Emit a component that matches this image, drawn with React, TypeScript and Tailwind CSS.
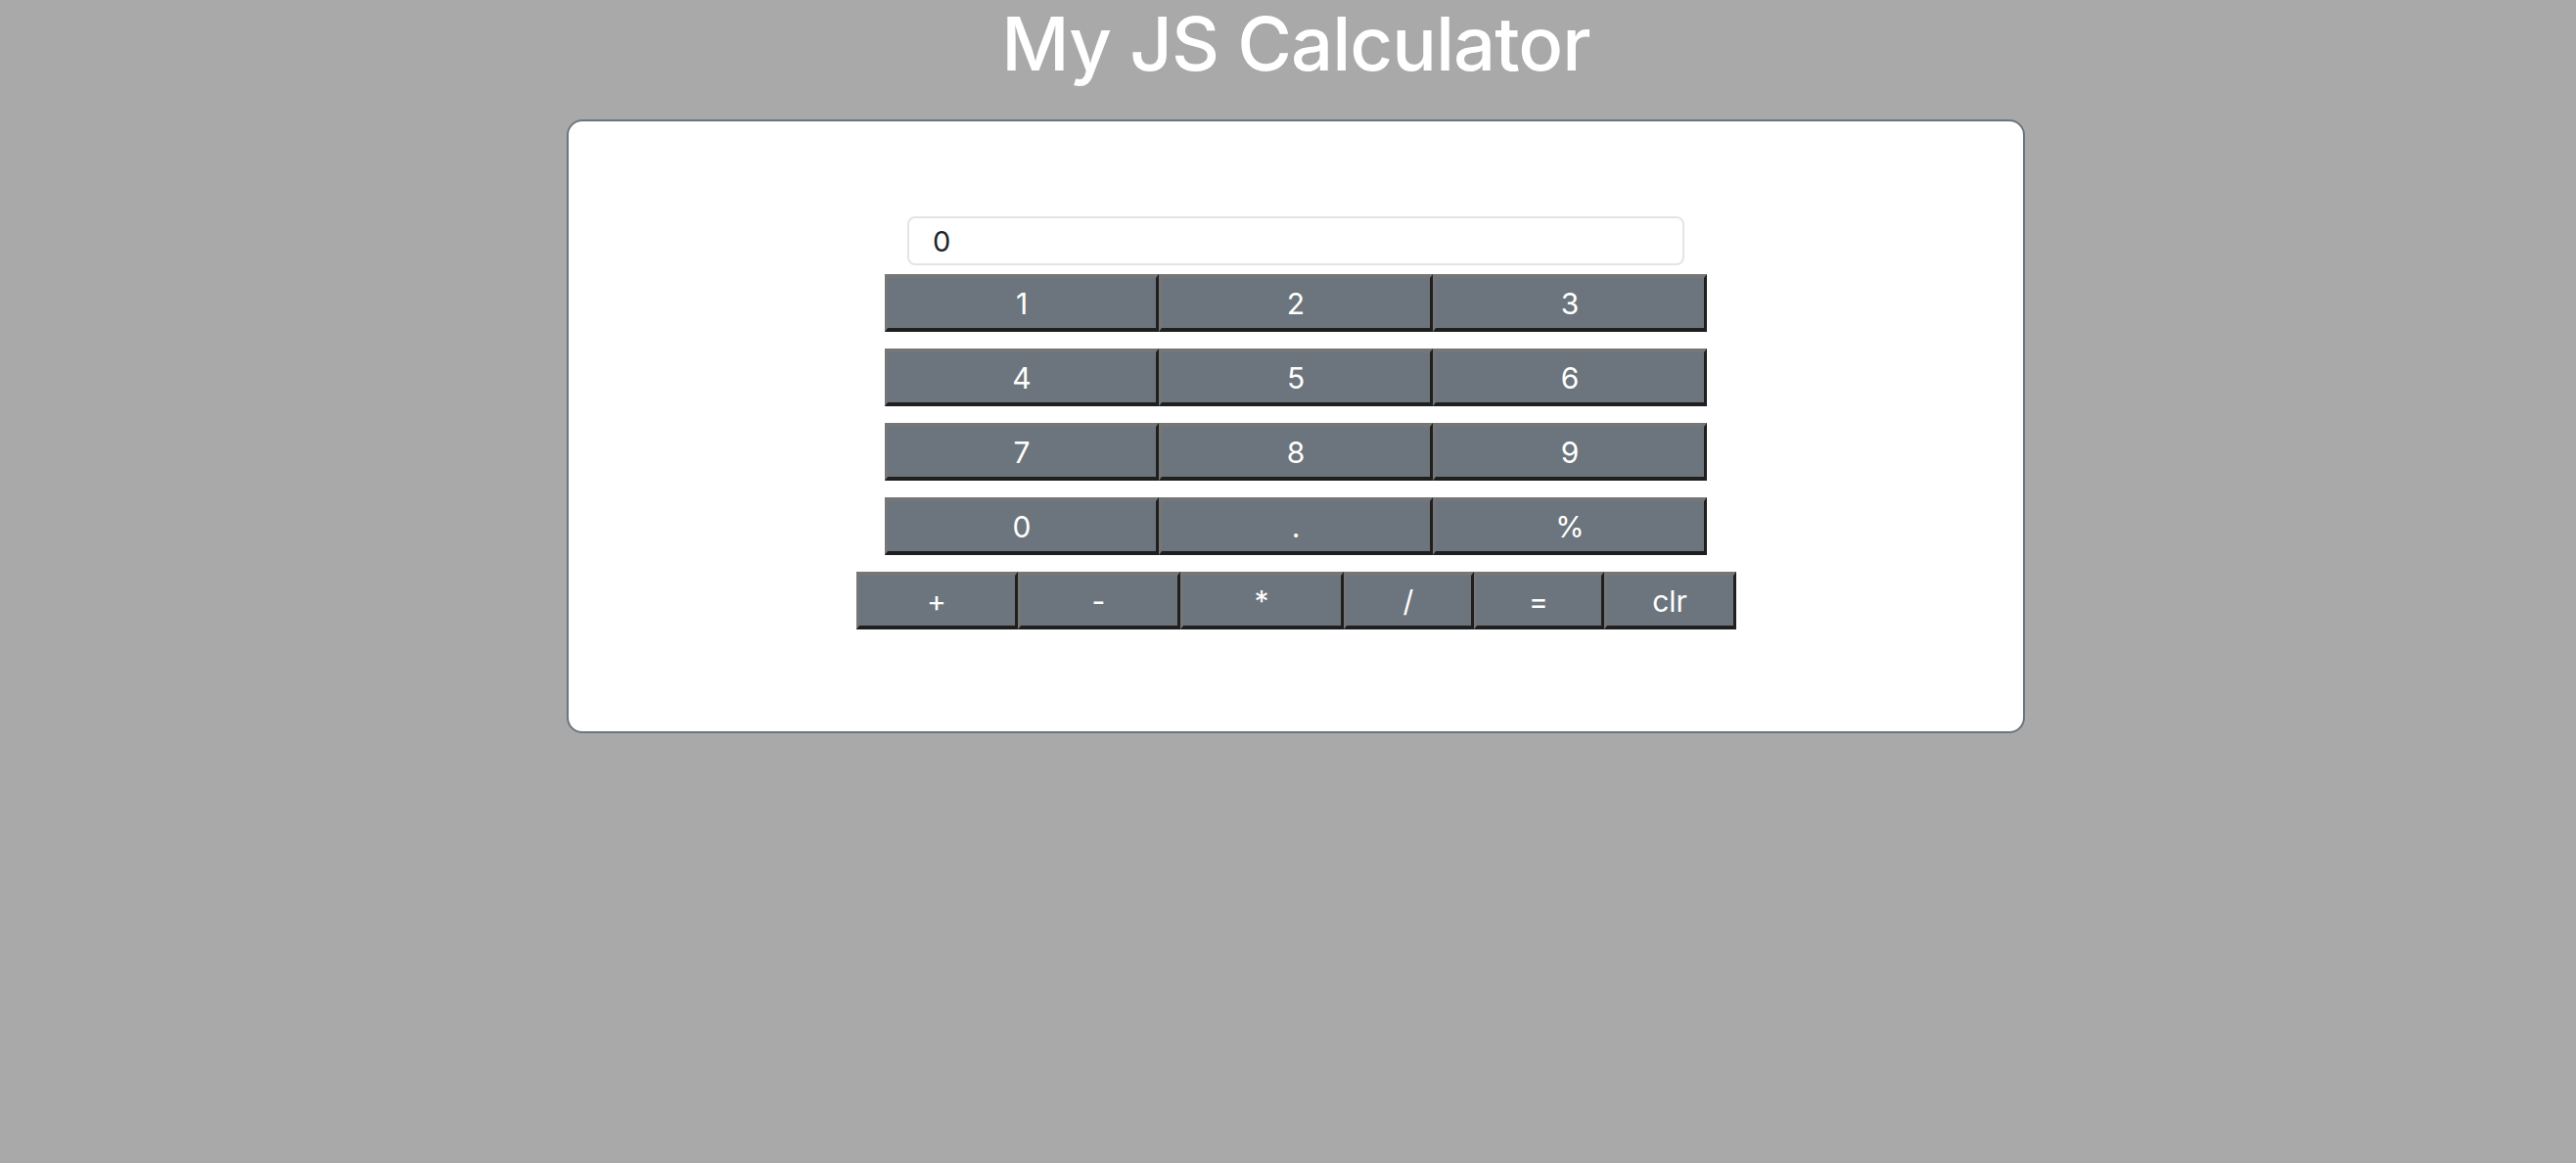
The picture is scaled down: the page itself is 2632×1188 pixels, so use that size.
import React from "react";

const btn =
  "flex items-center justify-center h-[59px] bg-[#6c757d] text-white text-[30px] leading-none border-t-4 border-l-[3px] border-r-[3px] border-b-4 border-t-[#767676] border-l-[#767676] border-r-[#1f1f1f] border-b-[#1f1f1f] box-border";

export default function App() {
  const rows = [
    ["1", "2", "3"],
    ["4", "5", "6"],
    ["7", "8", "9"],
    ["0", ".", "%"],
  ];
  const ops: [string, string][] = [
    ["+", "w-[165px]"],
    ["-", "w-[166px]"],
    ["*", "w-[167px]"],
    ["/", "w-[133px]"],
    ["=", "w-[133px]"],
    ["clr", "w-[135px]"],
  ];
  return (
    <div
      className="min-h-[1188px] w-full bg-[#a9a9a9] pl-[16px] flex flex-col items-center"
      style={{ fontFamily: "Inter, 'Noto Sans', sans-serif" }}
    >
      <h1 className="text-white text-[76px] font-medium leading-[89px] m-0 tracking-[-1px]">
        My JS Calculator
      </h1>
      <div className="mt-[33px] w-[1490px] h-[627px] bg-white border-2 border-[#6c757d] rounded-2xl box-border pt-[97px] flex flex-col items-center">
        <input
          readOnly
          value="0"
          className="w-[794px] h-[50px] border-2 border-[#e1e5e9] rounded-lg bg-white pl-[24px] text-[29px] text-[#212529] outline-none box-border"
          style={{ fontFamily: "Inter, 'Noto Sans', sans-serif" }}
        />
        <div className="mt-[9px] flex flex-col gap-[17px] items-center">
          {rows.map((r, i) => (
            <div key={i} className="flex w-[840px]">
              {r.map((k) => (
                <div key={k} className={btn + " w-[280px]"}>
                  {k}
                </div>
              ))}
            </div>
          ))}
          <div className="flex w-[899px]">
            {ops.map(([k, w]) => (
              <div key={k} className={btn + " " + w}>
                {k}
              </div>
            ))}
          </div>
        </div>
      </div>
    </div>
  );
}
